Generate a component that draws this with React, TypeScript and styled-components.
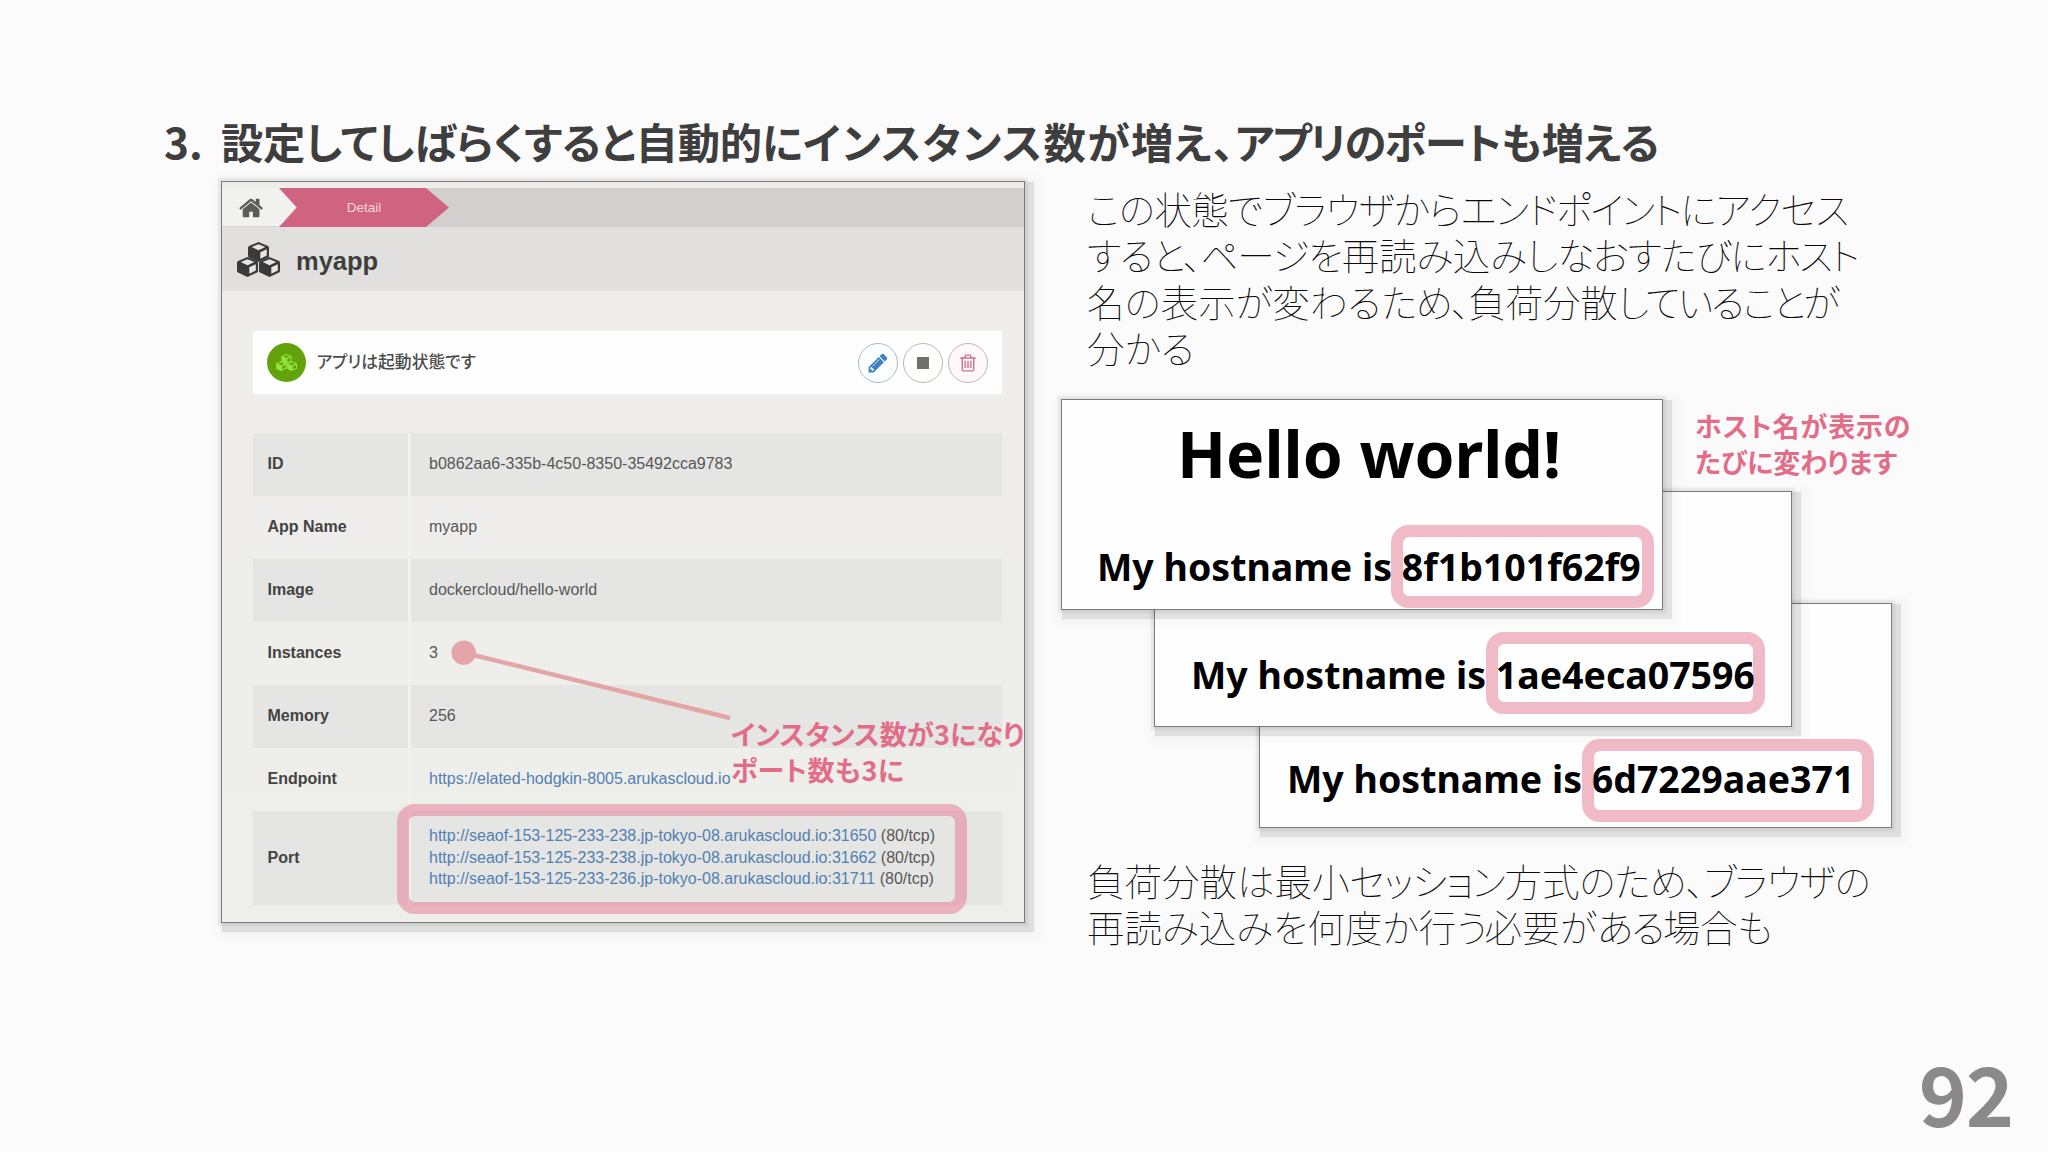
import React from "react";
import styled, { createGlobalStyle } from "styled-components";

const JP = '"Noto Sans CJK JP", "Noto Sans", sans-serif';
const ARIAL = '"Liberation Sans", "Noto Sans CJK JP", sans-serif';

const GlobalStyle = createGlobalStyle`
  *, *::before, *::after { box-sizing: border-box; }
  body { margin: 0; background: #fcfbfc; }
`;

const Slide = styled.main`
  position: relative;
  display: flex;
  flex-direction: column;
  width: 2048px;
  height: 1152px;
  padding-top: 110px;
  overflow: hidden;
  background: #fcfbfc;
  color: #0a0a0a;
  font-family: ${JP};
`;

const Title = styled.h1`
  display: grid;
  grid-template-columns: 57px 1fr;
  height: 61px;
  margin: 0 0 10px;
  padding-left: 164px;
  color: #3e3e3e;
  font-size: 42.4px;
  line-height: 61px;
  font-weight: 700;
  font-feature-settings: "palt";
  white-space: nowrap;
`;

const Columns = styled.div`
  display: grid;
  grid-template-columns: 804px 1fr;
  column-gap: 35px;
  padding-left: 221px;
`;

const frame = `
  border: 1.5px solid #7b7b7b;
  box-shadow: 0 0 2px 3px rgba(0, 0, 0, 0.07), 5px 5px 1px 4px rgba(0, 0, 0, 0.09),
    6px 6px 4px 11px rgba(0, 0, 0, 0.02);
`;

const Panel = styled.section`
  position: relative;
  height: 742px;
  padding-top: 6px;
  background: linear-gradient(#eeedec, #eeeeea);
  font-family: ${ARIAL};
  ${frame}
`;

const Breadcrumb = styled.nav`
  display: flex;
  height: 39px;
  background: #d1d0ce;
`;

const HomeCrumb = styled.div`
  display: flex;
  align-items: center;
  width: 74px;
  margin-right: -17px;
  padding: 2px 0 0 17px;
  background: #f1f1ef;
  clip-path: polygon(0 0, 57px 0, 74px 50%, 57px 100%, 0 100%);
  border-bottom: 1px solid #d8d8d6;
`;

const DetailCrumb = styled.div`
  display: flex;
  align-items: center;
  justify-content: center;
  width: 170px;
  background: #d0637f;
  clip-path: polygon(0 0, 147px 0, 170px 50%, 147px 100%, 0 100%, 18px 50%);
  color: #f6d5de;
  font-size: 13.5px;
`;

const PanelHeader = styled.header`
  display: flex;
  align-items: center;
  gap: 16px;
  height: 64px;
  padding-left: 15px;
  background: #e1e0de;
`;

const AppTitle = styled.h2`
  margin: 0;
  padding-top: 3px;
  color: #3d3f3f;
  font-size: 25.5px;
  line-height: 30px;
  font-weight: 700;
`;

const StatusCard = styled.div`
  display: flex;
  align-items: center;
  height: 63px;
  margin: 40px 22px 39px 31px;
  padding: 0 14px 0 14px;
  border-radius: 2px;
  background: #fefefe;
`;

const StatusBadge = styled.div`
  display: flex;
  align-items: center;
  justify-content: center;
  width: 39px;
  height: 39px;
  border-radius: 50%;
  background: #62a30c;
`;

const StatusText = styled.div`
  flex: 1;
  padding: 0 0 3px 10.5px;
  color: #4c4c4c;
  font-family: ${JP};
  font-size: 16.8px;
  line-height: 24px;
  font-weight: 500;
  font-feature-settings: "palt";
`;

const Actions = styled.div`
  display: flex;
  gap: 5px;
`;

const RoundButton = styled.div<{ $line: string; $fill: string }>`
  display: flex;
  align-items: center;
  justify-content: center;
  width: 40px;
  height: 40px;
  border: 1.5px solid ${(p) => p.$line};
  border-radius: 50%;
  background: ${(p) => p.$fill};
`;

const StopMark = styled.div`
  width: 12px;
  height: 12px;
  background: #6f7068;
`;

const Details = styled.dl`
  display: flex;
  flex-direction: column;
  margin: 0 22px 0 31px;
`;

const Row = styled.div<{ $tall?: boolean; $shade?: boolean }>`
  display: grid;
  grid-template-columns: 158px 1fr;
  height: ${(p) => (p.$tall ? 94 : 63)}px;
  background: ${(p) => (p.$shade ? "#e5e5e3" : "transparent")};
  font-size: 16px;
`;

const Label = styled.dt`
  display: flex;
  align-items: center;
  padding: 0 0 1px 14.5px;
  border-right: 3px solid #f1f1ef;
  color: #434343;
  font-weight: 700;
`;

const Value = styled.dd`
  display: flex;
  flex-direction: column;
  justify-content: center;
  margin: 0;
  padding: 0 0 1px 18px;
  color: #585858;
  line-height: 21.5px;
  white-space: nowrap;
`;

const Link = styled.span`
  color: #5280b3;
`;

const Highlight = styled.div<{ $x: number; $y: number; $w: number; $h: number }>`
  position: absolute;
  left: ${(p) => p.$x}px;
  top: ${(p) => p.$y}px;
  width: ${(p) => p.$w}px;
  height: ${(p) => p.$h}px;
  border: 12.5px solid rgba(227, 117, 143, 0.5);
  border-radius: 18px;
`;

const Pointer = styled.svg`
  position: absolute;
  left: 450px;
  top: 638px;
`;

const Callout = styled.p<{ $x: number; $y: number }>`
  position: absolute;
  left: ${(p) => p.$x}px;
  top: ${(p) => p.$y}px;
  margin: 0;
  color: #e26d88;
  font-size: 27px;
  line-height: 36px;
  font-weight: 700;
  font-feature-settings: "palt";
  white-space: nowrap;
`;

const Line = styled.span<{ $track?: number }>`
  display: block;
  letter-spacing: ${(p) => p.$track ?? 0}px;
`;

const Run = styled.span<{ $track: number }>`
  letter-spacing: ${(p) => p.$track}px;
`;

const Explain = styled.div`
  display: flex;
  flex-direction: column;
  padding-top: 4px;
`;

const Paragraph = styled.p`
  margin: 0;
  padding-left: 27px;
  font-size: 37.5px;
  line-height: 46.4px;
  font-weight: 100;
  font-feature-settings: "palt";
  white-space: nowrap;
`;

const Stage = styled.div`
  position: relative;
  height: 429px;
  margin: 28px 0 29px;
`;

const Shot = styled.div<{ $x: number; $y: number; $w: number; $h: number; $pad: number; $bottom: number }>`
  position: absolute;
  left: ${(p) => p.$x}px;
  top: ${(p) => p.$y}px;
  width: ${(p) => p.$w}px;
  height: ${(p) => p.$h}px;
  display: flex;
  flex-direction: column;
  justify-content: flex-end;
  padding: 0 0 ${(p) => p.$bottom}px ${(p) => p.$pad}px;
  background: #fefefe;
  color: #000;
  font-family: "Noto Sans", "Open Sans", sans-serif;
  font-weight: 700;
  white-space: nowrap;
  ${frame}
`;

const Hello = styled.div`
  margin-bottom: 49px;
  padding-left: 80px;
  font-size: 64.2px;
  line-height: 80px;
`;

const Host = styled.div`
  font-size: 37.5px;
  line-height: 50px;
`;

const PageNumber = styled.div`
  position: absolute;
  right: 35px;
  bottom: 2px;
  color: #8c898a;
  font-size: 82px;
  line-height: 116px;
  font-weight: 700;
  letter-spacing: -1.2px;
`;

const HomeIcon = () => (
  <svg width="26" height="26" viewBox="0 0 1792 1792" fill="#5b5b59">
    <path d="M1408 992v480q0 26-19 45t-45 19h-384v-384h-256v384h-384q-26 0-45-19t-19-45v-480q0-1 .5-3t.5-3l575-474 575 474q1 2 1 6zm223-69l-62 74q-8 9-21 11h-3q-13 0-21-7l-692-577-692 577q-12 8-24 7-13-2-21-11l-62-74q-8-10-7-23.5t11-21.5l719-599q32-26 76-26t76 26l244 204v-195q0-14 9-23t23-9h192q14 0 23 9t9 23v408l219 182q10 8 11 21.5t-7 23.5z" />
  </svg>
);

const CUBE_SPOTS = [[11, 0], [0, 15], [22, 15]];

const CubesIcon = ({ width, dark, light }: { width: number; dark: string; light: string }) => (
  <svg width={width} height={(width * 35) / 43} viewBox="0 0 43 35">
    {CUBE_SPOTS.map(([x, y]) => (
      <g key={x} transform={`translate(${x} ${y})`}>
        <path fill={dark} d="M10.5 0 20 4q1 .5 1 1.500v8.500q0 1-1 1.500L10.500 20 1 15.500Q0 15 0 14V5.500Q0 4.500 1 4Z" />
        <path fill={light} d="M10.500 2.200 17.300 5.100 10.500 8.200 3.700 5.100ZM12.300 10.200 18.800 7.300V13.600L12.300 16.800Z" />
      </g>
    ))}
  </svg>
);

const PencilIcon = () => (
  <svg width="22" height="22" viewBox="0 0 1792 1792" fill="#3f7fc4">
    <path d="M491 1536l91-91-235-235-91 91v107h128v128h107zm523-928q0-22-22-22-10 0-17 7l-542 542q-7 7-7 17 0 22 22 22 10 0 17-7l542-542q7-7 7-17zm-54-192l416 416-832 832h-416v-416zm683 96q0 53-37 90l-166 166-416-416 166-165q36-38 90-38 53 0 91 38l235 234q37 39 37 91z" />
  </svg>
);

const TrashIcon = () => (
  <svg width="20" height="20" viewBox="0 0 1792 1792" fill="#d0708c">
    <path d="M704 736v576q0 14-9 23t-23 9h-64q-14 0-23-9t-9-23v-576q0-14 9-23t23-9h64q14 0 23 9t9 23zm256 0v576q0 14-9 23t-23 9h-64q-14 0-23-9t-9-23v-576q0-14 9-23t23-9h64q14 0 23 9t9 23zm256 0v576q0 14-9 23t-23 9h-64q-14 0-23-9t-9-23v-576q0-14 9-23t23-9h64q14 0 23 9t9 23zm128 724v-948h-896v948q0 22 7 40.5t14.500 27 10.500 8.500h832q3 0 10.500-8.500t14.500-27 7-40.500zm-672-1076h448l-48-117q-7-9-17-11h-317q-10 2-17 11zm928 32v64q0 14-9 23t-23 9h-96v948q0 83-47 143.500t-113 60.500h-832q-66 0-113-58.500t-47-141.500v-952h-96q-14 0-23-9t-9-23v-64q0-14 9-23t23-9h309l70-167q15-37 54-63t79-26h320q40 0 79 26t54 63l70 167h309q14 0 23 9t9 23z" />
  </svg>
);

/* Text runs paired with their tracking in pixels. */
type Runs = [string, number][];

const TITLE: Runs = [
  ["設定してしばらくすると", -0.35],
  ["自動的に", -0.2],
  ["インス", 1.3],
  ["タンス数が", 1.5],
  ["増え、", 0.7],
  ["アプリの", -1.8],
  ["ポートも増える", -0.3],
];

const INTRO: Runs[] = [
  [["この状態で", -0.6], ["ブラウザからエン", -0.9], ["ドポイント", -1.8], ["にアクセス", -0.8]],
  [["すると、ページを", -1.1], ["再読み込み", -0.2], ["しなおすたびに", -1.1], ["ホスト", -2.3]],
  [["名の表示が変わる", 0], ["ため、", -1.6], ["負荷分散", -0.2], ["していること", -2.3], ["が", 0]],
  [["分かる", 0]],
];

const NOTE: Runs[] = [
  [["負荷分散は最小", 0], ["セッション", -1.2], ["方式", -0.1], ["のため、", -1], ["ブラウザの", -1]],
  [["再読み込みを何度か行", 0], ["う", -3], ["必要が", 0.3], ["ある", -2], ["場合も", -0.5]],
];

const Tracked = ({ runs }: { runs: Runs }) => (
  <>
    {runs.map(([text, track]) => (
      <Run key={text} $track={track}>{text}</Run>
    ))}
  </>
);

const ROWS = [
  ["ID", "b0862aa6-335b-4c50-8350-35492cca9783"],
  ["App Name", "myapp"],
  ["Image", "dockercloud/hello-world"],
  ["Instances", "3"],
  ["Memory", "256"],
];

const PORTS = [
  "http://seaof-153-125-233-238.jp-tokyo-08.arukascloud.io:31650",
  "http://seaof-153-125-233-238.jp-tokyo-08.arukascloud.io:31662",
  "http://seaof-153-125-233-236.jp-tokyo-08.arukascloud.io:31711",
];

export default function App() {
  return (
    <>
      <GlobalStyle />
      <Slide>
        <Title>
          <span>3.</span>
          <span><Tracked runs={TITLE} /></span>
        </Title>
        <Columns>
          <Panel>
            <Breadcrumb>
              <HomeCrumb><HomeIcon /></HomeCrumb>
              <DetailCrumb>Detail</DetailCrumb>
            </Breadcrumb>
            <PanelHeader>
              <CubesIcon width={43} dark="#3a3a3a" light="#e6e5e3" />
              <AppTitle>myapp</AppTitle>
            </PanelHeader>
            <StatusCard>
              <StatusBadge><CubesIcon width={21} dark="#92e33c" light="#62a30c" /></StatusBadge>
              <StatusText>アプリは起動状態です</StatusText>
              <Actions>
                <RoundButton $line="#a9bccb" $fill="#fbfeff"><PencilIcon /></RoundButton>
                <RoundButton $line="#b9b9b7" $fill="#fefefc"><StopMark /></RoundButton>
                <RoundButton $line="#c9b4bc" $fill="#fff8fa"><TrashIcon /></RoundButton>
              </Actions>
            </StatusCard>
            <Details>
              {ROWS.map(([label, value], i) => (
                <Row key={label} $shade={i % 2 === 0}>
                  <Label>{label}</Label>
                  <Value>{value}</Value>
                </Row>
              ))}
              <Row>
                <Label>Endpoint</Label>
                <Value><Link>https://elated-hodgkin-8005.arukascloud.io</Link></Value>
              </Row>
              <Row $tall $shade>
                <Label>Port</Label>
                <Value>
                  {PORTS.map((url) => (
                    <div key={url}><Link>{url}</Link> (80/tcp)</div>
                  ))}
                </Value>
              </Row>
            </Details>
          </Panel>
          <Explain>
            <Paragraph>
              {INTRO.map((runs, i) => (
                <Line key={i}><Tracked runs={runs} /></Line>
              ))}
            </Paragraph>
            <Stage>
              <Shot $x={198.5} $y={204} $w={633.5} $h={225} $pad={27.5} $bottom={22.5}>
                <Host>My hostname is 6d7229aae371</Host>
              </Shot>
              <Shot $x={94} $y={92} $w={638} $h={236} $pad={36} $bottom={26}>
                <Host>My hostname is 1ae4eca07596</Host>
              </Shot>
              <Shot $x={0.5} $y={0} $w={602.5} $h={211} $pad={35.5} $bottom={17}>
                <Hello>Hello world!</Hello>
                <Host>My hostname is 8f1b101f62f9</Host>
              </Shot>
            </Stage>
            <Paragraph>
              {NOTE.map((runs, i) => (
                <Line key={i}><Tracked runs={runs} /></Line>
              ))}
            </Paragraph>
          </Explain>
        </Columns>
        <Highlight $x={396.5} $y={804} $w={570.5} $h={110} />
        <Highlight $x={1391} $y={525} $w={263} $h={83} />
        <Highlight $x={1485.5} $y={632} $w={279.5} $h={82} />
        <Highlight $x={1581.5} $y={739} $w={292.5} $h={83} />
        <Pointer width="290" height="90" viewBox="0 0 290 90">
          <path d="M14 14.700 280 80" stroke="#e3a5a6" strokeWidth="4.500" />
          <circle cx="13.700" cy="14.700" r="12.200" fill="#e4a5a8" />
        </Pointer>
        <Callout $x={731} $y={716}>
          <Line $track={0.15}>インスタンス数が3になり</Line>
          <Line $track={0.5}>ポート数も3に</Line>
        </Callout>
        <Callout $x={1695} $y={408}>
          <Line $track={0.85}>ホスト名が表示の</Line>
          <Line>たびに変わります</Line>
        </Callout>
        <PageNumber>92</PageNumber>
      </Slide>
    </>
  );
}
